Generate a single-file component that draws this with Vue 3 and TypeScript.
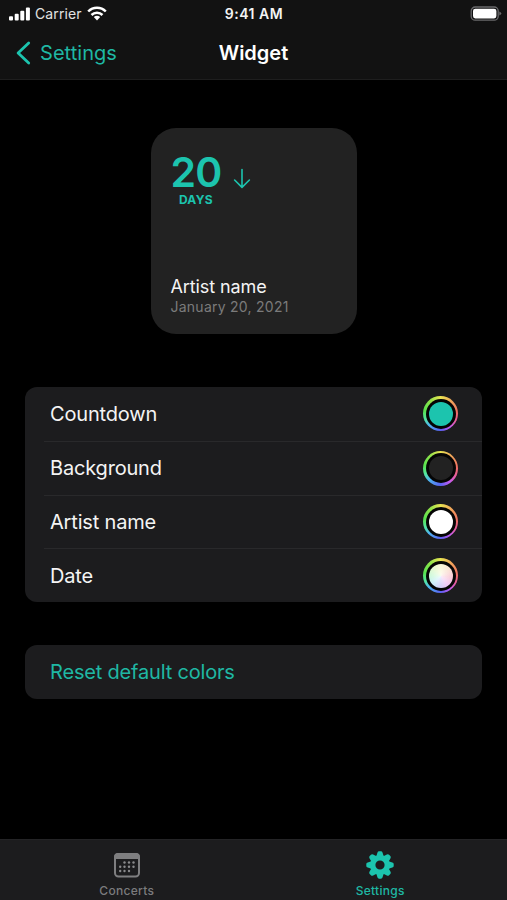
<script setup lang="ts">
interface ColorRow {
  label: string
  swatch: string
}

const rows: ColorRow[] = [
  { label: 'Countdown', swatch: 'teal' },
  { label: 'Background', swatch: 'dark' },
  { label: 'Artist name', swatch: 'white' },
  { label: 'Date', swatch: 'pastel' },
]

const dots: [number, number][] = [
  [10.5, 10.5], [15, 10.5], [19.5, 10.5],
  [6.2, 14.8], [10.5, 14.8], [15, 14.8], [19.5, 14.8],
  [6.2, 19], [10.5, 19], [15, 19],
]

const teeth: number[] = [0, 45, 90, 135, 180, 225, 270, 315]
</script>

<template>
  <div class="screen">
    <header class="header">
      <div class="status">
        <div class="carrier">
          <svg class="signal" width="22" height="14" viewBox="0 0 22 14" fill="#fff">
            <rect x="0" y="9.3" width="4" height="4.2" rx="1" />
            <rect x="5.7" y="6.8" width="4" height="6.7" rx="1" />
            <rect x="11.3" y="3.8" width="4" height="9.7" rx="1" />
            <rect x="16.9" y="0.5" width="4" height="13" rx="1" />
          </svg>
          <span class="carrier-name">Carrier</span>
          <svg class="wifi" width="20" height="15" viewBox="0 0 20 15" fill="none" stroke="#fff" stroke-width="2.5">
            <path d="M1.2 5.5 C6 .5 14 .5 18.8 5.5" />
            <path d="M4.5 9 C7.5 6 12.5 6 15.5 9" />
            <path d="M6.8 11 Q10 8.5 13.2 11 L10 14.4 Z" fill="#fff" stroke="none" />
          </svg>
        </div>
        <span class="time">9:41 AM</span>
        <svg class="battery" width="32" height="16" viewBox="0 0 32 16">
          <rect x="1.2" y="1" width="27" height="13.2" rx="4" fill="none" stroke="#69696b" stroke-width="1.3" />
          <rect x="3" y="2.8" width="23.4" height="9.6" rx="2.3" fill="#fff" />
          <path d="M29.3 5.6 Q31.3 6.4 31.3 7.6 Q31.3 8.8 29.3 9.6 Z" fill="#69696b" />
        </svg>
      </div>
      <nav class="nav">
        <div class="back">
          <svg width="16" height="24" viewBox="0 0 16 24" fill="none" stroke="#1cc4ae" stroke-width="2.8" stroke-linecap="round" stroke-linejoin="round">
            <path d="M13.7 2 L3.1 12 L13.7 22" />
          </svg>
          <span>Settings</span>
        </div>
        <h1 class="title">Widget</h1>
        <div></div>
      </nav>
    </header>

    <main class="content">
      <section class="widget">
        <div class="countdown">
          <div class="count">
            <span class="number">20</span>
            <span class="days">DAYS</span>
          </div>
          <svg class="arrow" width="18" height="21" viewBox="0 0 18 21" fill="none" stroke="#1cc4ae" stroke-width="1.6" stroke-linecap="round" stroke-linejoin="round">
            <path d="M9 1.5 V19.200 M1.600 12 L9 19.400 L16.400 12" />
          </svg>
        </div>
        <div class="artist">Artist name</div>
        <div class="date">January 20, 2021</div>
      </section>

      <ul class="list">
        <li v-for="row in rows" :key="row.label" class="row">
          <span class="row-label">{{ row.label }}</span>
          <span class="well"><span class="well-gap"><span class="swatch" :class="row.swatch"></span></span></span>
        </li>
      </ul>

      <button class="reset" type="button">Reset default colors</button>
    </main>

    <footer class="tabs">
      <div class="tab">
        <svg width="28" height="28" viewBox="0 0 28 28">
          <rect x="2" y="3" width="24" height="22.500" rx="3.500" fill="none" stroke="#7e7e80" stroke-width="2" />
          <path d="M1 8 V6 Q1 2 5 2 H23 Q27 2 27 6 V8 Z" fill="#7e7e80" />
          <g fill="#8a8a8c" transform="translate(1 1)">
            <circle v-for="(d, i) in dots" :key="i" :cx="d[0]" :cy="d[1]" r="1.200" />
          </g>
        </svg>
        <span class="tab-label">Concerts</span>
      </div>
      <div class="tab active">
        <svg width="28" height="28" viewBox="-14 -14 28 28">
          <circle r="7.300" fill="none" stroke="#1cc4ae" stroke-width="5.400" />
          <path
            v-for="a in teeth"
            :key="a"
            d="M-3.700 -8.500 L-2.600 -12.300 Q-2.200 -13.700 -.9 -13.700 H.9 Q2.200 -13.700 2.600 -12.300 L3.700 -8.500 Z"
            fill="#1cc4ae"
            :transform="`rotate(${a})`"
          />
        </svg>
        <span class="tab-label">Settings</span>
      </div>
    </footer>
  </div>
</template>

<style>
body {
  margin: 0;
  background: #000;
}
</style>

<style scoped>
.screen {
  box-sizing: border-box;
  width: 507px;
  height: 900px;
  display: flex;
  flex-direction: column;
  background: #000;
  color: #f4f4f4;
  font-family: Inter, "Liberation Sans", sans-serif;
  overflow: hidden;
}
.header {
  box-sizing: border-box;
  height: 80px;
  background: #121212;
  border-bottom: 1px solid #1e1e1e;
}
.status {
  display: grid;
  grid-template-columns: 1fr auto 1fr;
  align-items: center;
  height: 27px;
  padding: 0 5px 0 9px;
}
.carrier {
  display: flex;
  align-items: center;
}
.carrier-name {
  margin-left: 4px;
  font-size: 14px;
  letter-spacing: 0.1px;
  color: #e2e2e2;
}
.wifi {
  margin-left: 5px;
}
.time {
  font-size: 14px;
  font-weight: 600;
  letter-spacing: 0.5px;
  margin-left: -3px;
}
.battery {
  justify-self: end;
}
.nav {
  display: grid;
  grid-template-columns: 1fr auto 1fr;
  align-items: center;
  height: 51px;
  padding: 0 15px;
}
.back {
  display: flex;
  align-items: center;
  gap: 9px;
  color: #1fb8a4;
  font-size: 20px;
  letter-spacing: 0.05px;
}
.title {
  margin: 0;
  font-size: 20px;
  font-weight: 600;
  color: #fff;
}
.content {
  flex: 1;
  display: flex;
  flex-direction: column;
  padding: 48px 25px 0;
}
.widget {
  box-sizing: border-box;
  align-self: center;
  width: 206px;
  height: 206px;
  padding: 24px 20px 19px;
  border-radius: 25px;
  background: #222;
  display: flex;
  flex-direction: column;
}
.countdown {
  display: flex;
  color: #1cc4ae;
}
.count {
  display: flex;
  flex-direction: column;
  align-items: center;
}
.number {
  font-size: 41px;
  line-height: 41px;
  font-weight: 600;
  letter-spacing: -0.9px;
}
.days {
  font-size: 12px;
  line-height: 14px;
  font-weight: 700;
  letter-spacing: 0.3px;
}
.arrow {
  margin: 16px 0 0 12px;
}
.artist {
  margin-top: auto;
  font-size: 18px;
  line-height: 22px;
  letter-spacing: -0.1px;
}
.date {
  font-size: 14px;
  line-height: 17px;
  letter-spacing: 0.25px;
  color: #7b7b7b;
}
.list {
  list-style: none;
  margin: 53px 0 0;
  padding: 0;
  border-radius: 12px;
  background: #1c1c1e;
}
.row {
  display: flex;
  align-items: center;
  justify-content: space-between;
  height: 53.75px;
  margin-left: 19px;
  padding: 0 24px 0 6px;
  box-sizing: border-box;
}
.row + .row {
  border-top: 1px solid #29292b;
}
.row-label {
  font-size: 20px;
  letter-spacing: -0.18px;
}
.well {
  width: 35px;
  height: 35px;
  border-radius: 50%;
  display: grid;
  place-items: center;
  background: conic-gradient(#e8e451, #f1ae59 35deg, #ef6f63 85deg, #e85d9a 115deg, #c45cf0 145deg, #5961f3 180deg, #4eb5ee 225deg, #53e7a0 250deg, #58e34f 280deg, #8ee34a 320deg, #e8e451);
}
.well-gap {
  width: 30px;
  height: 30px;
  border-radius: 50%;
  display: grid;
  place-items: center;
  background: #050505;
}
.swatch {
  width: 24px;
  height: 24px;
  border-radius: 50%;
}
.teal {
  background: #1cc4ae;
}
.dark {
  background: #222;
}
.white {
  background: #fff;
}
.pastel {
  background:
    radial-gradient(circle, #fffa, #fff0 65%),
    conic-gradient(#faf7d8, #fae3d4 50deg, #f9ccd8 95deg, #f0c8f6 145deg, #d2d0fa 185deg, #cdf0fa 230deg, #cff9dc 270deg, #e8f9d0 320deg, #faf7d8);
}
.reset {
  appearance: none;
  height: 54px;
  margin: 43px 0 0;
  padding: 0 25px;
  border: 0;
  border-radius: 12px;
  background: #1c1c1e;
  color: #1fb8a4;
  font: 400 20px Inter, "Liberation Sans", sans-serif;
  letter-spacing: -0.18px;
  text-align: left;
}
.tabs {
  box-sizing: border-box;
  display: grid;
  grid-template-columns: 1fr 1fr;
  height: 61px;
  padding-top: 11px;
  border-top: 1px solid #242426;
  background: #1c1c1e;
}
.tab {
  display: flex;
  flex-direction: column;
  align-items: center;
  color: #7b7b7d;
}
.tab.active {
  color: #1fb8a4;
}
.tab-label {
  margin-top: 4px;
  font-size: 12px;
  line-height: 15px;
  font-weight: 500;
  letter-spacing: 0.3px;
}
</style>
